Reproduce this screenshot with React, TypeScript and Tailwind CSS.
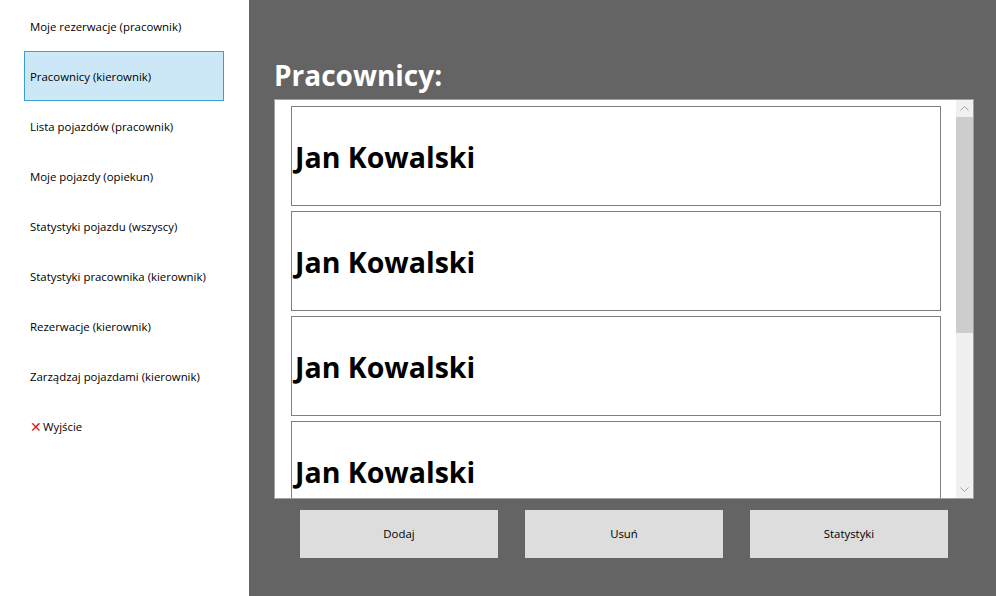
import { useState } from 'react';

const menu = [
    'Moje rezerwacje (pracownik)',
    'Pracownicy (kierownik)',
    'Lista pojazdów (pracownik)',
    'Moje pojazdy (opiekun)',
    'Statystyki pojazdu (wszyscy)',
    'Statystyki pracownika (kierownik)',
    'Rezerwacje (kierownik)',
    'Zarządzaj pojazdami (kierownik)',
];

const workers = ['Jan Kowalski', 'Jan Kowalski', 'Jan Kowalski', 'Jan Kowalski'];

export default function App() {
    const [active, setActive] = useState(1);

    return (
        <div
            className="flex w-[996px] h-[596px] overflow-hidden"
            style={{ fontFamily: '"Open Sans", "Noto Sans", sans-serif' }}
        >
            {/* Sidebar */}
            <div className="w-[249px] h-full bg-white pt-[1px] pl-[24px] flex flex-col">
                {menu.map((item, i) => (
                    <button
                        key={i}
                        onClick={() => setActive(i)}
                        className={`w-[200px] h-[50px] flex items-center px-[5px] pt-[1px] text-left text-[11.4px] text-black border ${
                            active === i ? 'bg-[#cce8f6] border-[#3c9fd5]' : 'border-transparent'
                        }`}
                    >
                        {item}
                    </button>
                ))}
                <button className="w-[200px] h-[50px] flex items-center px-[5px] pt-[1px] text-[11.4px] text-black border border-transparent">
                    <span className="text-[#e81123] text-[14px] leading-none mr-[1px]">✕</span>
                    Wyjście
                </button>
            </div>

            {/* Main */}
            <div className="flex-1 h-full bg-[#646464] pl-[25px] pt-[57px]">
                <h1 className="text-white font-bold text-[28px] leading-[36px] mb-[6px]">Pracownicy:</h1>

                <div className="w-[700px] h-[400px] bg-white border border-[#a0a0a0] flex overflow-hidden">
                    <div className="flex-1 pl-[16px] pt-[6px] flex flex-col gap-[5px] overflow-hidden">
                        {workers.map((w, i) => (
                            <div
                                key={i}
                                className="w-[650px] h-[100px] shrink-0 border border-[#7f7f7f] flex items-center pl-[3px] pt-[3px]"
                            >
                                <span className="text-[28.5px] font-bold text-black">{w}</span>
                            </div>
                        ))}
                    </div>

                    {/* Scrollbar */}
                    <div className="w-[17px] h-full bg-[#f0f0f0] flex flex-col items-center">
                        <div className="h-[17px] w-full flex items-center justify-center">
                            <svg width="9" height="5" viewBox="0 0 9 5">
                                <path d="M0.5 4.5 L4.5 0.5 L8.5 4.5" fill="none" stroke="#a3a3a3" strokeWidth="1" />
                            </svg>
                        </div>
                        <div className="w-full h-[216px] bg-[#cdcdcd]" />
                        <div className="flex-1" />
                        <div className="h-[17px] w-full flex items-center justify-center">
                            <svg width="9" height="5" viewBox="0 0 9 5">
                                <path d="M0.5 0.5 L4.5 4.5 L8.5 0.5" fill="none" stroke="#a3a3a3" strokeWidth="1" />
                            </svg>
                        </div>
                    </div>
                </div>

                <div className="flex gap-[27px] pl-[26px] mt-[11px]">
                    {['Dodaj', 'Usuń', 'Statystyki'].map((b) => (
                        <button
                            key={b}
                            className="w-[198px] h-[48px] bg-[#dddddd] text-[11.4px] text-black flex items-center justify-center"
                        >
                            {b}
                        </button>
                    ))}
                </div>
            </div>
        </div>
    );
}
